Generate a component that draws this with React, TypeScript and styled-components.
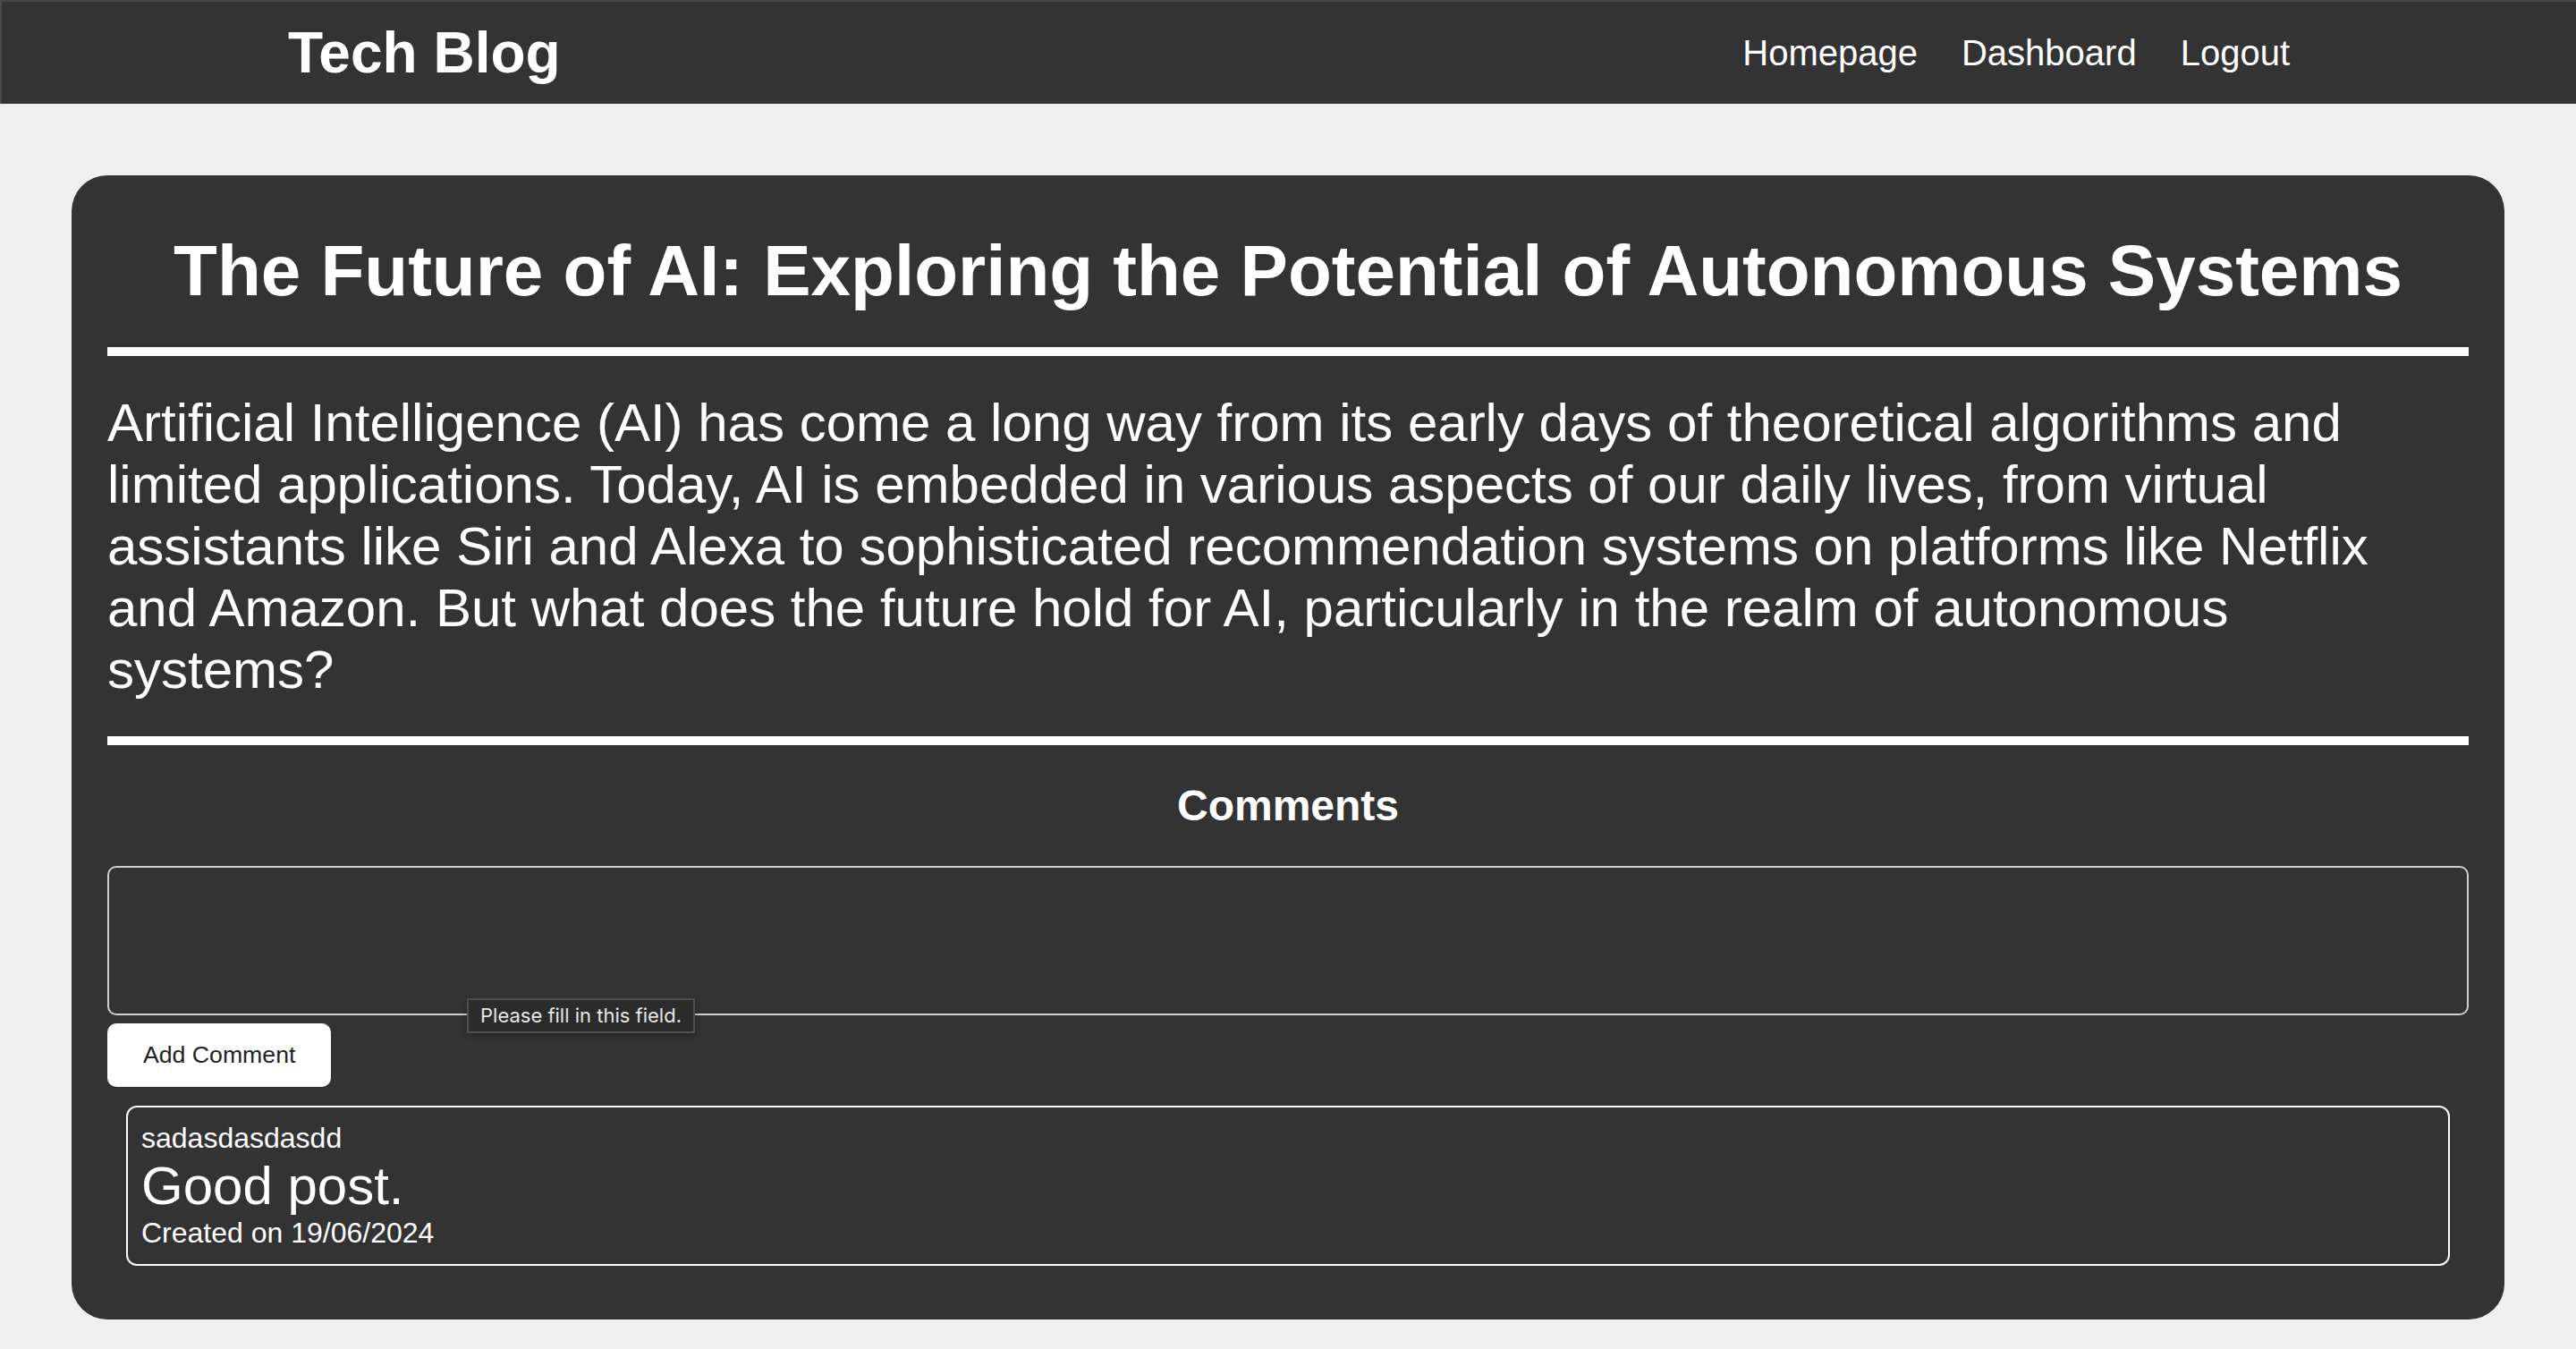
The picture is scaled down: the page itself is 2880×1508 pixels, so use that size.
import * as React from 'react'
import styled, { createGlobalStyle } from 'styled-components'

const GlobalStyle = createGlobalStyle`
    html,
    body {
        margin: 0;
        padding: 0;
        background: #efefef;
        font-family: 'Liberation Sans', Arial, sans-serif;
    }
    * {
        box-sizing: border-box;
    }
`

const Header = styled.header`
    display: flex;
    justify-content: space-between;
    align-items: center;
    height: 116px;
    padding: 0 320px;
    background: #333333;
    border-top: 2px solid #474747;
    border-left: 2px solid #4a4a4a;
`

const Brand = styled.h1`
    margin: 0;
    font-size: 64px;
    font-weight: bold;
    color: #ffffff;
`

const Nav = styled.nav`
    display: flex;
    gap: 49px;
`

const NavLink = styled.a`
    font-size: 40px;
    color: #ffffff;
    text-decoration: none;
    cursor: pointer;
`

const PostCard = styled.article`
    margin: 80px 80px;
    padding: 40px;
    border-radius: 40px;
    background: #333333;
    color: #ffffff;
`

const PostTitle = styled.h2`
    margin: 21px 0 39px;
    font-size: 80px;
    font-weight: bold;
    text-align: center;
`

const Divider = styled.hr`
    height: 10px;
    margin: 0;
    border: none;
    background: #ffffff;
`

const PostBody = styled.p`
    margin: 40px 0;
    font-size: 60px;
    line-height: 69px;
`

const CommentsTitle = styled.h3`
    margin: 40px 0 40px;
    font-size: 48px;
    font-weight: bold;
    text-align: center;
`

const CommentForm = styled.form`
    position: relative;
    display: flex;
    flex-direction: column;
    align-items: flex-start;
`

const CommentInput = styled.textarea`
    width: 100%;
    height: 167px;
    padding: 12px;
    border: 2px solid #cfcfcf;
    border-radius: 10px;
    background: #333333;
    color: #ffffff;
    font-family: 'Liberation Sans', Arial, sans-serif;
    font-size: 32px;
    resize: none;
    outline: none;
`

const ValidationBubble = styled.div`
    position: absolute;
    left: 402px;
    top: 148px;
    padding: 5px 13px 6px;
    background: #2b2b2b;
    border: 2px solid #4e4e4e;
    box-shadow: 0 2px 6px rgba(0, 0, 0, 0.35);
    color: #e6e6e6;
    font-family: Inter, 'Liberation Sans', sans-serif;
    font-size: 22px;
    line-height: 24px;
    white-space: nowrap;
`

const AddButton = styled.button`
    height: 71px;
    margin-top: 9px;
    padding: 0 40px;
    border: none;
    border-radius: 10px;
    background: #ffffff;
    color: #222222;
    font-family: 'Liberation Sans', Arial, sans-serif;
    font-size: 26.67px;
    cursor: pointer;
`

const CommentCard = styled.div`
    margin: 21px 21px 20px;
    padding: 16px 15px;
    border: 2px solid #ffffff;
    border-radius: 12px;
`

const CommentAuthor = styled.div`
    font-size: 32px;
`

const CommentText = styled.div`
    font-size: 60px;
`

const CommentDate = styled.div`
    font-size: 32px;
`

const comments = [
    { author: 'sadasdasdasdd', text: 'Good post.', date: '19/06/2024' },
]

const App = () => (
    <>
        <GlobalStyle />
        <Header>
            <Brand>Tech Blog</Brand>
            <Nav>
                <NavLink>Homepage</NavLink>
                <NavLink>Dashboard</NavLink>
                <NavLink>Logout</NavLink>
            </Nav>
        </Header>
        <PostCard>
            <PostTitle>
                The Future of AI: Exploring the Potential of Autonomous Systems
            </PostTitle>
            <Divider />
            <PostBody>
                Artificial Intelligence (AI) has come a long way from its early
                days of theoretical algorithms and limited applications. Today,
                AI is embedded in various aspects of our daily lives, from
                virtual assistants like Siri and Alexa to sophisticated
                recommendation systems on platforms like Netflix and Amazon. But
                what does the future hold for AI, particularly in the realm of
                autonomous systems?
            </PostBody>
            <Divider />
            <CommentsTitle>Comments</CommentsTitle>
            <CommentForm onSubmit={(e) => e.preventDefault()}>
                <CommentInput required />
                <ValidationBubble>Please fill in this field.</ValidationBubble>
                <AddButton type="submit">Add Comment</AddButton>
            </CommentForm>
            {comments.map((comment) => (
                <CommentCard key={comment.author}>
                    <CommentAuthor>{comment.author}</CommentAuthor>
                    <CommentText>{comment.text}</CommentText>
                    <CommentDate>Created on {comment.date}</CommentDate>
                </CommentCard>
            ))}
        </PostCard>
    </>
)

export default App
